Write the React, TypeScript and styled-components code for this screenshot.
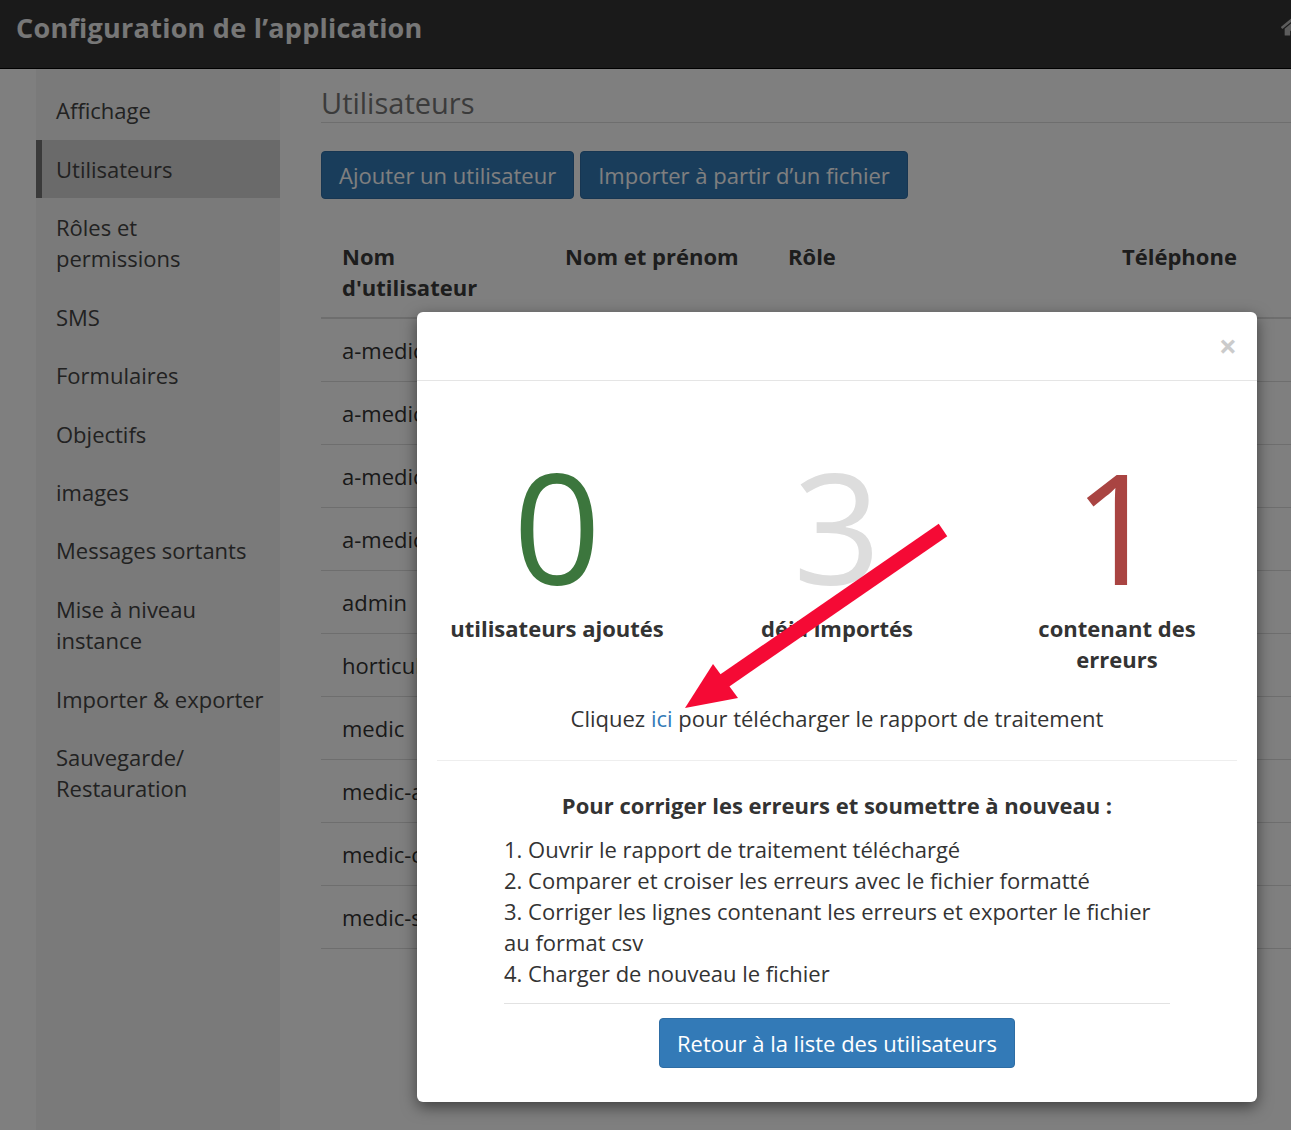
import React from 'react';
import styled, { createGlobalStyle } from 'styled-components';
import { FaHome } from 'react-icons/fa';

const GlobalStyle = createGlobalStyle`
  html, body {
    margin: 0;
    padding: 0;
    background: #fff;
    overflow: hidden;
  }
  body {
    font-family: "Open Sans", "Noto Sans", sans-serif;
    color: #333;
  }
  * {
    box-sizing: border-box;
  }
`;

const Page = styled.div`
  position: relative;
  width: 1291px;
  height: 1130px;
  overflow: hidden;
`;

const Header = styled.header`
  height: 69px;
  background: #353535;
  border-bottom: 1px solid #000;
  display: flex;
  align-items: center;
  padding: 0 0 14px 16px;
`;

const AppTitle = styled.h1`
  margin: 0;
  font-size: 27px;
  font-weight: 700;
  color: #eee;
  letter-spacing: 0.25px;
`;

const HomeLink = styled.span`
  margin-left: auto;
  margin-right: -12px;
  display: flex;
  color: #b8b8b8;
`;

const Layout = styled.div`
  display: flex;
  height: calc(100% - 69px);
  padding-left: 36px;
`;

const Sidebar = styled.nav`
  width: 244px;
  flex-shrink: 0;
  background: #f4f4f4;
  padding-top: 12.5px;
`;

const NavItem = styled.div<{ $active?: boolean }>`
  font-size: 22px;
  line-height: 31.25px;
  padding: 13.6px 16px 13.6px ${(p) => (p.$active ? '14px' : '20px')};
  color: #444;
  background: ${(p) => (p.$active ? '#d4d4d4' : 'transparent')};
  border-left: ${(p) => (p.$active ? '6px solid #747474' : 'none')};
`;

const Main = styled.main`
  flex: 1;
  min-width: 0;
  margin-left: 41px;
  padding-top: 14px;
  overflow: hidden;
`;

const PageTitle = styled.h2`
  margin: 0;
  font-size: 29px;
  line-height: 39px;
  font-weight: 400;
  color: #777;
  border-bottom: 1px solid #ddd;
`;

const Actions = styled.div`
  display: flex;
  gap: 6px;
  margin-top: 28px;
`;

const Button = styled.button<{ $large?: boolean }>`
  font-family: inherit;
  font-size: 22px;
  line-height: 30px;
  padding: ${(p) => (p.$large ? '9px 17px' : '8px 17px')};
  color: #fff;
  background: #337ab7;
  border: 1px solid #2e6da4;
  border-radius: 4px;
  cursor: pointer;
`;

const Table = styled.table`
  margin-top: 26px;
  width: 1100px;
  border-collapse: collapse;
  table-layout: fixed;
  font-size: 22px;
  line-height: 31px;
`;

const Th = styled.th<{ $w: number }>`
  width: ${(p) => p.$w}px;
  text-align: left;
  vertical-align: top;
  font-weight: 700;
  color: #3a3a3a;
  padding: 16px 21px 14px;
  border-bottom: 2px solid #ddd;
`;

const Td = styled.td`
  padding: 16px 21px 15px;
  color: #333;
  border-bottom: 1px solid #ddd;
  white-space: nowrap;
  overflow: hidden;
`;

const Backdrop = styled.div`
  position: absolute;
  inset: 0;
  background: rgba(0, 0, 0, 0.5);
`;

const Modal = styled.div`
  position: absolute;
  left: 417px;
  top: 312px;
  width: 840px;
  height: 790px;
  background: #fff;
  border-radius: 6px;
  box-shadow: 0 5px 15px rgba(0, 0, 0, 0.5);
  font-size: 22px;
  line-height: 31px;
  color: #333;
`;

const ModalHeader = styled.div`
  height: 69px;
  border-bottom: 1px solid #e5e5e5;
  display: flex;
  justify-content: flex-end;
  align-items: center;
  padding-right: 20px;
`;

const Close = styled.span`
  font-size: 32px;
  font-weight: 700;
  color: #000;
  opacity: 0.2;
  line-height: 1;
`;

const ModalBody = styled.div`
  padding: 20px;
`;

const Stats = styled.div`
  display: grid;
  grid-template-columns: repeat(3, 1fr);
  margin: 47px -20px 0;
`;

const Stat = styled.div`
  text-align: center;
  padding: 0 25px;
`;

const Count = styled.div<{ $color: string }>`
  font-size: 154px;
  line-height: 1;
  font-weight: 400;
  color: ${(p) => p.$color};
`;

const StatLabel = styled.div`
  margin-top: 11px;
  font-weight: 700;
`;

const Report = styled.p`
  text-align: center;
  margin: 28px 0 0;
`;

const Link = styled.a`
  color: #337ab7;
  text-decoration: none;
`;

const Divider = styled.hr`
  border: 0;
  border-top: 1px solid #eee;
  margin: 26px 0 0;
`;

const Instructions = styled.div`
  margin: 0 67px;
`;

const InstructionsTitle = styled.h4`
  margin: 29px 0 13px;
  font-size: 22px;
  line-height: 31px;
  text-align: center;
  font-weight: 700;
`;

const Steps = styled.ol`
  margin: 0;
  padding: 0;
  list-style-position: inside;
`;

const StepsRule = styled.hr`
  border: 0;
  border-top: 1px solid #e2e2e2;
  margin: 14px 0 14px;
`;

const Footer = styled.div`
  display: flex;
  justify-content: center;
`;

const Arrow = styled.svg`
  position: absolute;
  left: 0;
  top: 0;
  pointer-events: none;
`;

const navItems = [
  'Affichage',
  'Utilisateurs',
  'Rôles et permissions',
  'SMS',
  'Formulaires',
  'Objectifs',
  'images',
  'Messages sortants',
  'Mise à niveau instance',
  'Importer & exporter',
  'Sauvegarde/ Restauration',
];

const users = [
  'a-medic-01',
  'a-medic-02',
  'a-medic-03',
  'a-medic-04',
  'admin',
  'horticulteur',
  'medic',
  'medic-admin',
  'medic-chw',
  'medic-super',
];

const App: React.FC = () => {
  return (
    <>
      <GlobalStyle />
      <Page>
        <Header>
          <AppTitle>Configuration de l’application</AppTitle>
          <HomeLink>
            <FaHome size={22} />
          </HomeLink>
        </Header>
        <Layout>
          <Sidebar>
            {navItems.map((item) => (
              <NavItem key={item} $active={item === 'Utilisateurs'}>
                {item}
              </NavItem>
            ))}
          </Sidebar>
          <Main>
            <PageTitle>Utilisateurs</PageTitle>
            <Actions>
              <Button>Ajouter un utilisateur</Button>
              <Button>Importer à partir d’un fichier</Button>
            </Actions>
            <Table>
              <thead>
                <tr>
                  <Th $w={223}>Nom d'utilisateur</Th>
                  <Th $w={223}>Nom et prénom</Th>
                  <Th $w={334}>Rôle</Th>
                  <Th $w={240}>Téléphone</Th>
                  <Th $w={80}></Th>
                </tr>
              </thead>
              <tbody>
                {users.map((u) => (
                  <tr key={u}>
                    <Td>{u}</Td>
                    <Td></Td>
                    <Td></Td>
                    <Td></Td>
                    <Td></Td>
                  </tr>
                ))}
              </tbody>
            </Table>
          </Main>
        </Layout>

        <Backdrop />

        <Modal>
          <ModalHeader>
            <Close>×</Close>
          </ModalHeader>
          <ModalBody>
            <Stats>
              <Stat>
                <Count $color="#3c763d">0</Count>
                <StatLabel>utilisateurs ajoutés</StatLabel>
              </Stat>
              <Stat>
                <Count $color="#dddddd">3</Count>
                <StatLabel>déjà importés</StatLabel>
              </Stat>
              <Stat>
                <Count $color="#a94442">1</Count>
                <StatLabel>contenant des erreurs</StatLabel>
              </Stat>
            </Stats>
            <Report>
              Cliquez <Link href="#">ici</Link> pour télécharger le rapport de traitement
            </Report>
            <Divider />
            <Instructions>
              <InstructionsTitle>Pour corriger les erreurs et soumettre à nouveau :</InstructionsTitle>
              <Steps>
                <li>Ouvrir le rapport de traitement téléchargé</li>
                <li>Comparer et croiser les erreurs avec le fichier formatté</li>
                <li>Corriger les lignes contenant les erreurs et exporter le fichier au format csv</li>
                <li>Charger de nouveau le fichier</li>
              </Steps>
              <StepsRule />
            </Instructions>
            <Footer>
              <Button $large>Retour à la liste des utilisateurs</Button>
            </Footer>
          </ModalBody>
        </Modal>

        {/* annotation arrow drawn over the screenshot */}
        <Arrow width={1291} height={1130} viewBox="0 0 1291 1130">
          <line x1={943} y1={530} x2={724} y2={681} stroke="#f50a35" strokeWidth={15} />
          <polygon points="685,708 713,664 738,698" fill="#f50a35" />
        </Arrow>
      </Page>
    </>
  );
};

export default App;
